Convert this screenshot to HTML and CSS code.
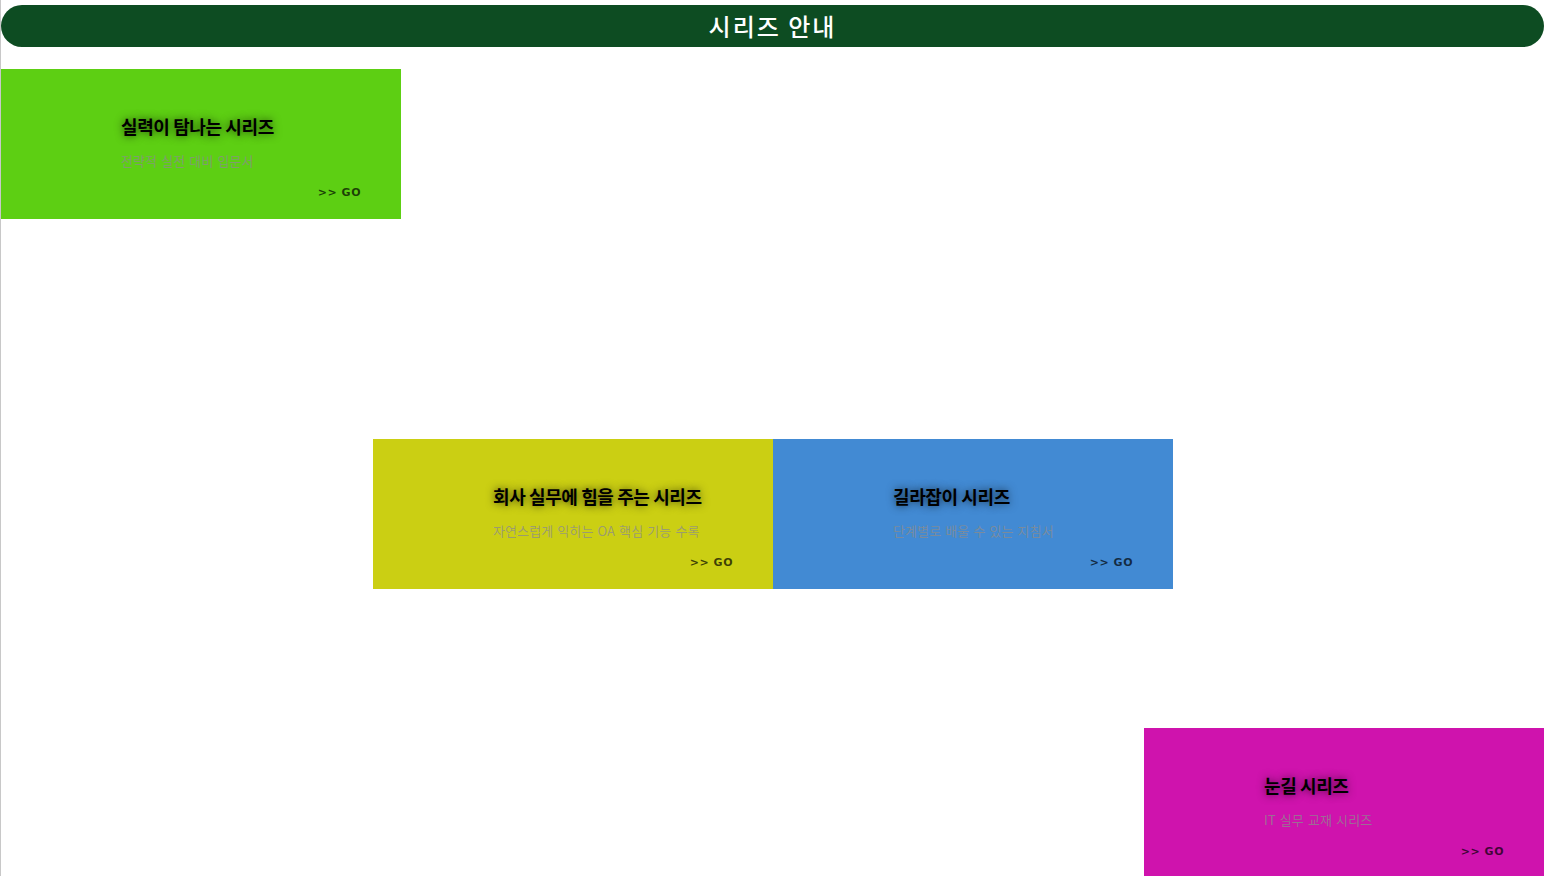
FILE: index.html
```html
<!DOCTYPE html>
<html>
<head>
    <title>시리즈 안내</title>
    <link rel="stylesheet" href="styles.css">
</head>
<body>
    <div class="page">
        <div class="top-bar">
            <h1>시리즈 안내</h1>
        </div>

        <!-- row 1 -->
        <div class="row row-one">
            <div class="card green">
                <h3>실력이 탐나는 시리즈</h3>
                <p>전략적 실전 대비 입문서</p>
                <a class="go">&gt;&gt; GO</a>
            </div>
        </div>

        <!-- row 2 -->
        <div class="row row-two">
            <div class="card yellow">
                <h3>회사 실무에 힘을 주는 시리즈</h3>
                <p>자연스럽게 익히는 OA 핵심 기능 수록</p>
                <a class="go">&gt;&gt; GO</a>
            </div>
            <div class="card blue">
                <h3>길라잡이 시리즈</h3>
                <p>단계별로 배울 수 있는 지침서</p>
                <a class="go">&gt;&gt; GO</a>
            </div>
        </div>

        <!-- row 3 -->
        <div class="row row-three">
            <div class="card pink">
                <h3>눈길 시리즈</h3>
                <p>IT 실무 교재 시리즈</p>
                <a class="go">&gt;&gt; GO</a>
            </div>
        </div>
    </div>
</body>
</html>
```

FILE: styles.css
```css
html, body {
    margin: 0;
    padding: 0;
    height: 100%;
    overflow: hidden;
    background: #fff;
    font-family: "Noto Sans CJK KR", "Noto Sans", sans-serif;
}

.page {
    border-left: 1px solid #c8c8c8;
    min-height: 100%;
    box-sizing: border-box;
    padding-top: 5px;
}

.top-bar {
    background: #0d4c22;
    height: 42px;
    border-radius: 21px;
    display: flex;
    justify-content: center;
    align-items: center;
}

.top-bar h1 {
    margin: 0;
    color: #fff;
    font-size: 24px;
    font-weight: 500;
    letter-spacing: 2px;
    line-height: 42px;
}

.row {
    display: flex;
}

.row-one {
    margin-top: 22px;
}

.row-two {
    margin-top: 220px;
    padding-left: 372px;
}

.row-three {
    margin-top: 139px;
    justify-content: flex-end;
}

.card {
    width: 400px;
    height: 150px;
    box-sizing: border-box;
    padding: 45px 40px 0 120px;
    display: flex;
    flex-direction: column;
}

.card h3 {
    margin: 0;
    font-size: 18px;
    font-weight: 700;
    letter-spacing: -0.4px;
    line-height: 24px;
    color: #000;
    text-shadow: 0 0 8px rgba(0, 0, 0, 0.7);
}

.card p {
    margin: 14px 0 0;
    font-size: 13px;
    letter-spacing: 0.1px;
    word-spacing: 1px;
    line-height: 18px;
    color: rgba(140, 140, 140, 0.75);
}

.go {
    align-self: flex-end;
    margin-top: 16px;
    font-family: "DejaVu Sans", sans-serif;
    font-weight: 700;
    font-size: 11px;
    letter-spacing: 0.5px;
    color: rgba(0, 0, 0, 0.7);
}

.green { background: #5dcf13; }
.yellow { background: #cbcf13; }
.blue { background: #428ad3; }
.pink { background: #cf13ad; }
```
